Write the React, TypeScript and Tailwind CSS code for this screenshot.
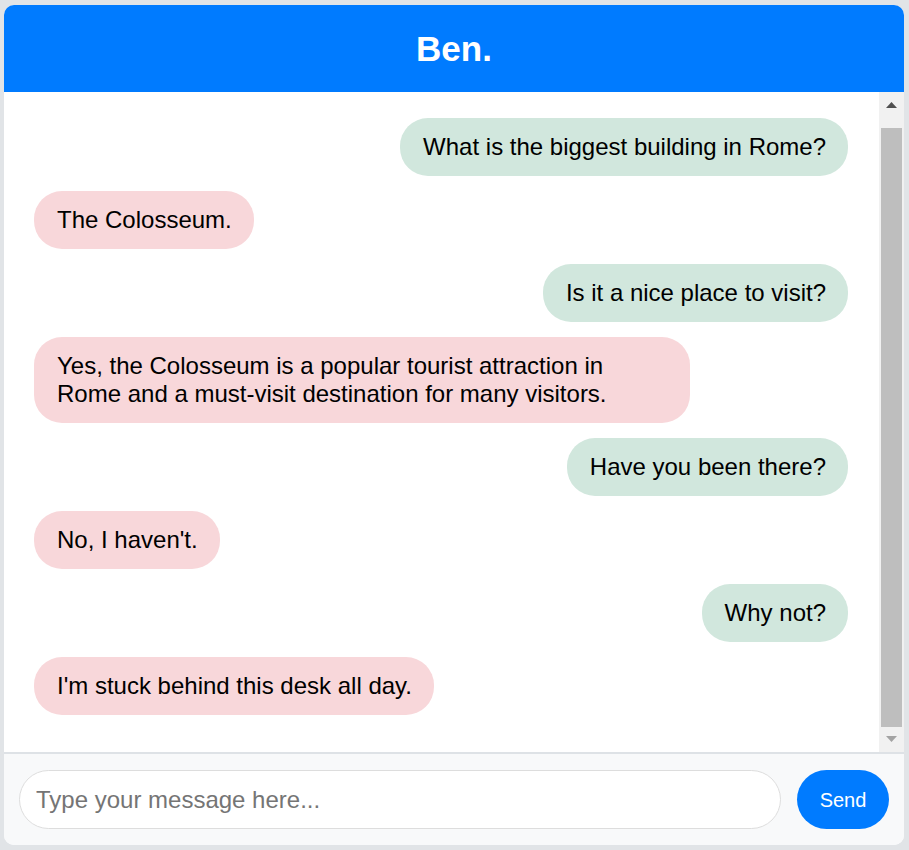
import React, { useLayoutEffect, useRef } from "react";

const messages: { from: "user" | "bot"; text: string }[] = [
  { from: "user", text: "What is the biggest building in Rome?" },
  { from: "bot", text: "The Colosseum." },
  { from: "user", text: "Is it a nice place to visit?" },
  { from: "bot", text: "Yes, the Colosseum is a popular tourist attraction in Rome and a must-visit destination for many visitors." },
  { from: "user", text: "Have you been there?" },
  { from: "bot", text: "No, I haven't." },
  { from: "user", text: "Why not?" },
  { from: "bot", text: "I'm stuck behind this desk all day." },
];

export default function App() {
  const scrollRef = useRef<HTMLDivElement>(null);

  useLayoutEffect(() => {
    const el = scrollRef.current;
    if (el) el.scrollTop = el.scrollHeight;
  }, []);

  return (
    <div
      className="min-h-screen w-full bg-[#e1e4e7] py-[5px] pl-[4px]"
      style={{ fontFamily: '"Liberation Sans", Arial, sans-serif' }}
    >
      <div className="flex h-[840px] w-[900px] flex-col overflow-hidden rounded-[10px] bg-white">
        <div className="flex h-[87px] shrink-0 items-center justify-center bg-[#007bff]">
          <h1 className="text-[35px] font-bold leading-none text-white">Ben.</h1>
        </div>
        <div className="flex h-[660px] shrink-0 bg-white">
          <div ref={scrollRef} className="min-w-0 flex-1 overflow-y-auto [scrollbar-width:none]">
            <div className="flex flex-col gap-[15px] pl-[30px] pr-[31px] pt-[38px] pb-[37px]">
              {messages.map((m, i) => (
                <div key={i} className={m.from === "user" ? "flex justify-end" : "flex justify-start"}>
                  <div
                    className={
                      (m.from === "user" ? "bg-[#d1e7dd]" : "bg-[#f8d7da]") +
                      " max-w-[656px] rounded-[28px] py-[15px] pl-[23px] pr-[22px] text-[24px] leading-[28px] text-black"
                    }
                  >
                    {m.text}
                  </div>
                </div>
              ))}
            </div>
          </div>
          <div className="flex w-[25px] shrink-0 flex-col bg-[#f1f1f1]">
            <div className="flex h-[25px] shrink-0 items-start justify-center pt-[10px]">
              <svg width="11" height="6" viewBox="0 0 11 6">
                <polygon points="5.5,0 11,6 0,6" fill="#505050" />
              </svg>
            </div>
            <div className="flex flex-1 flex-col px-[2px] pt-[11px]">
              <div className="flex-1 bg-[#bebebe]" />
            </div>
            <div className="flex h-[25px] shrink-0 items-start justify-center pt-[9px]">
              <svg width="11" height="6" viewBox="0 0 11 6">
                <polygon points="0,0 11,0 5.5,6" fill="#a3a3a3" />
              </svg>
            </div>
          </div>
        </div>
        <div className="flex flex-1 items-center gap-[16px] border-t-2 border-[#dee2e6] bg-[#f8f9fa] px-[15px]">
          <input
            type="text"
            placeholder="Type your message here..."
            className="h-[59px] flex-1 rounded-full border border-[#dddddd] bg-white px-[16px] text-[24px] text-black outline-none placeholder:text-[#757575]"
            style={{ fontFamily: '"Liberation Sans", Arial, sans-serif' }}
          />
          <button
            className="h-[59px] w-[92px] rounded-full bg-[#007bff] text-[20px] text-white"
            style={{ fontFamily: '"Liberation Sans", Arial, sans-serif' }}
          >
            Send
          </button>
        </div>
      </div>
    </div>
  );
}
